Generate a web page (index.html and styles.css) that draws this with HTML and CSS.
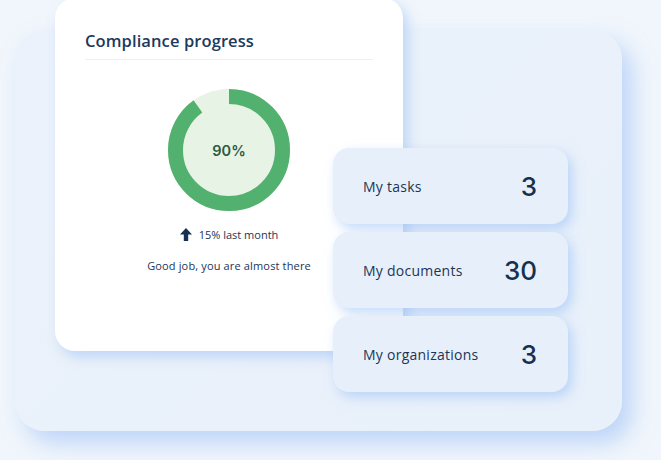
FILE: index.html
```html
<!DOCTYPE html>
<html lang="en">
<head>
<meta charset="utf-8">
<title>Compliance progress</title>
<link rel="stylesheet" href="styles.css">
</head>
<body>
<main class="stage">
  <div class="backdrop"></div>
  <section class="progress-card">
    <h2 class="progress-title">Compliance progress</h2>
    <div class="donut">
      <svg width="122" height="122" viewBox="0 0 122 122">
        <circle cx="61" cy="61" r="61" fill="#e7f3e5"/>
        <circle cx="61" cy="61" r="53.5" fill="none" stroke="#53b16f" stroke-width="15" stroke-dasharray="302.5 400" transform="rotate(-90 61 61)"/>
      </svg>
      <span class="donut-value">90%</span>
    </div>
    <p class="trend">
      <svg class="trend-icon" width="12" height="13" viewBox="0 0 12 13"><path d="M6 0 L12 6.5 H8.2 V13 H3.8 V6.5 H0 Z" fill="#16314f"/></svg>
      <span>15% last month</span>
    </p>
    <p class="note">Good job, you are almost there</p>
  </section>
  <div class="stats">
    <div class="stat"><span class="stat-label">My tasks</span><span class="stat-num">3</span></div>
    <div class="stat"><span class="stat-label">My documents</span><span class="stat-num">30</span></div>
    <div class="stat"><span class="stat-label">My organizations</span><span class="stat-num">3</span></div>
  </div>
</main>
</body>
</html>
```
FILE: styles.css
```css
html, body {
  margin: 0;
  padding: 0;
}
body {
  width: 661px;
  height: 460px;
  overflow: hidden;
  background: #f1f6fc;
  font-family: "Open Sans", "Liberation Sans", sans-serif;
  color: #1b3556;
}
.stage {
  display: grid;
  grid-template-columns: 15px 40px 278px 70px 165px 54px 39px;
  grid-template-rows: 30px 118px 203px 41px 39px 29px;
  width: 661px;
  height: 460px;
}
.backdrop {
  grid-column: 2 / 7;
  grid-row: 2 / 6;
  background: linear-gradient(135deg, #ebf2fb 0%, #e8f0fa 100%);
  border-radius: 30px;
  box-shadow: 10px 12px 22px rgba(140, 182, 245, 0.5);
}
.progress-card {
  grid-column: 3 / 5;
  grid-row: 1 / 4;
  background: #ffffff;
  border-radius: 20px;
  margin-top: -2px;
  box-shadow: 5px 6px 12px rgba(150, 190, 245, 0.5);
  padding: 32px 30px 0 30px;
  display: flex;
  flex-direction: column;
  align-items: center;
}
.progress-title {
  align-self: stretch;
  margin: 0;
  font-size: 16.5px;
  font-weight: 600;
  color: #1b3a5e;
  letter-spacing: 0.1px;
  padding-bottom: 7px;
  border-bottom: 1.5px solid #eceff3;
  line-height: 22px;
}
.donut {
  position: relative;
  width: 122px;
  height: 122px;
  margin-top: 29px;
}
.donut svg {
  display: block;
}
.donut-value {
  position: absolute;
  inset: 0;
  display: flex;
  align-items: center;
  justify-content: center;
  font-family: "Inter", "Liberation Sans", sans-serif;
  font-size: 14.5px;
  font-weight: 600;
  color: #2f5a40;
}
.trend {
  margin: 16px 0 0 0;
  display: flex;
  align-items: center;
  gap: 7px;
  font-size: 11px;
  color: #1b3556;
}
.trend-icon {
  display: block;
}
.note {
  margin: 16px 0 0 0;
  font-size: 11px;
  letter-spacing: 0.15px;
  color: #1b3556;
}
.stats {
  grid-column: 4 / 6;
  grid-row: 3 / 5;
  display: flex;
  flex-direction: column;
  gap: 8px;
}
.stat {
  height: 76px;
  box-sizing: border-box;
  background: #e7f0fa;
  border-radius: 16px;
  box-shadow: 4px 5px 12px rgba(150, 190, 245, 0.55);
  display: flex;
  align-items: center;
  justify-content: space-between;
  padding: 0 31px 0 30px;
}
.stat-label {
  font-size: 14px;
  font-weight: 500;
  letter-spacing: 0.25px;
  color: #1b3556;
}
.stat-num {
  font-family: "Inter", "Liberation Sans", sans-serif;
  font-size: 26px;
  font-weight: 500;
  color: #16314f;
}
```
